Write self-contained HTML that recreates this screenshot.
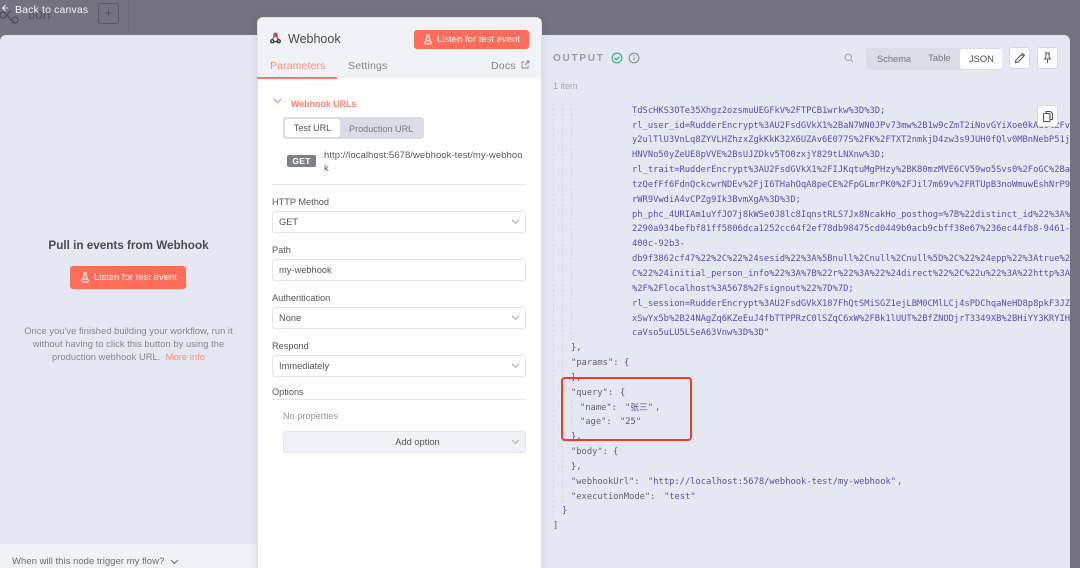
<!DOCTYPE html>
<html><head><meta charset="utf-8"><style>
*{box-sizing:border-box;margin:0;padding:0}
html,body{width:1080px;height:568px;overflow:hidden;background:#75727f}
body{font-family:"Liberation Sans","Noto Sans CJK SC",sans-serif}
#r{position:absolute;left:0;top:0;width:1080px;height:568px;overflow:hidden;filter:blur(.3px)}
.a{position:absolute;white-space:nowrap}
.btn{background:#ff6d5a;border-radius:3px;color:#fff;font-size:9.5px}
.lb{left:272px;font-size:9.2px;color:#555;line-height:12px}
.sel{left:272px;width:254px;height:22px;background:#fff;border:1px solid #e2e5ef;border-radius:3px;font-size:9.3px;color:#555;line-height:21px;padding-left:6px}
.sel svg{position:absolute;right:5px;top:7px}
.j{position:absolute;font-family:"DejaVu Sans Mono","Noto Sans CJK SC",monospace;font-size:8.78px;line-height:15px;color:#5451ac;white-space:pre}
.k{color:#62626d}
.g{position:absolute;width:0;border-left:1px dashed #d6d9e3}
.ib{position:absolute;background:#fff;border:1px solid #d6d9e2;border-radius:3px;width:21px;height:22px}
</style></head><body><div id="r">

<!-- dim background -->
<div class="a" style="left:128px;top:0;width:1px;height:35px;background:#6f6c79"></div>
<svg class="a" style="left:0;top:6px" width="22" height="18" viewBox="0 0 22 18" fill="none" stroke="#4e4c56" stroke-width="1.2"><circle cx="3" cy="9" r="3"/><circle cx="15" cy="14" r="3"/><path d="M6 9c3 0 3 5 6 5M6 9c2 0 3-4 5-4"/></svg>
<div class="a" style="left:28px;top:6px;font-size:14px;line-height:16px;color:#55535d">tion</div>
<div class="a" style="left:98px;top:3px;width:21px;height:21px;border:1px solid #5c5a65;border-radius:3px;color:#55535d;font-size:12px;line-height:19px;text-align:center">+</div>
<svg class="a" style="left:1px;top:3px" width="10" height="12" viewBox="0 0 10 12" fill="none" stroke="#e8e8ec" stroke-width="1.1"><path d="M7 5H2M4.5 2 1.5 5l3 3"/></svg>
<div class="a" style="left:15px;top:3.5px;font-size:10.5px;line-height:13px;color:#f4f4f6;letter-spacing:.15px">Back to canvas</div>

<!-- modal -->
<div class="a" style="left:0;top:35px;width:1070px;height:533px;background:#e5e8f2;border-radius:6px 6px 0 0"></div>

<!-- left panel -->
<div class="a" style="left:0;top:238px;width:257px;text-align:center;font-size:11.7px;line-height:15px;font-weight:bold;color:#4a4a4f">Pull in events from Webhook</div>
<div class="a btn" style="left:70px;top:266px;width:116px;height:23px;line-height:23px;padding-left:24px">Listen for test event</div>
<svg class="a" style="left:80px;top:272px" width="10" height="11" viewBox="0 0 10 11" fill="none" stroke="#fff" stroke-width="1"><path d="M3.5 1h3M4 1v3L1.7 8.5q-.5 1.5 1 1.5h4.6q1.5 0 1-1.5L6 4V1M2.5 7h5"/></svg>
<div class="a" style="left:0;top:325px;width:257px;text-align:center;font-size:9.3px;line-height:13.2px;color:#85868c;letter-spacing:.06px">Once you've finished building your workflow, run it<br>without having to click this button by using the<br>production webhook URL.&nbsp; <span style="color:#ff8a7a">More info</span></div>
<div class="a" style="left:0;top:544px;width:257px;height:24px;background:#f0f2f8"></div>
<div class="a" style="left:12px;top:555.5px;font-size:9.55px;line-height:12px;color:#6d6e74">When will this node trigger my flow?</div>
<svg class="a" style="left:170px;top:559px" width="9" height="6" viewBox="0 0 9 6" fill="none" stroke="#6d6e74" stroke-width="1"><path d="M1 1l3.5 3.5L8 1"/></svg>

<!-- output -->
<div class="a" style="left:553px;top:52px;font-size:10px;line-height:13px;font-weight:bold;color:#9a9ba2;letter-spacing:1.75px">OUTPUT</div>
<svg class="a" style="left:611px;top:52px" width="12" height="12" viewBox="0 0 12 12" fill="none" stroke="#27b07e" stroke-width="1.1"><circle cx="6" cy="6" r="4.9"/><path d="M3.7 6l1.7 1.7 3-3"/></svg>
<svg class="a" style="left:628px;top:52px" width="12" height="12" viewBox="0 0 12 12" fill="none" stroke="#85868c" stroke-width="1"><circle cx="6" cy="6" r="4.9"/><path d="M6 5.5v3M6 3.3v1"/></svg>
<div class="a" style="left:553px;top:80px;font-size:9px;line-height:12px;color:#a5a6ac">1 item</div>
<svg class="a" style="left:844px;top:53px" width="10" height="10" viewBox="0 0 10 10" fill="none" stroke="#a0a2a9" stroke-width="1"><circle cx="4.3" cy="4.3" r="3.2"/><path d="M6.7 6.7 9 9"/></svg>
<div class="a" style="left:866px;top:48px;width:136px;height:22px;background:#dadde6;border-radius:3px"></div>
<div class="a" style="left:960px;top:49px;width:42px;height:20px;background:#fff;border-radius:3px"></div>
<div class="a" style="left:877px;top:52.5px;font-size:9.3px;line-height:12px;color:#777880">Schema</div>
<div class="a" style="left:928px;top:52.5px;font-size:9.5px;line-height:12px;color:#777880">Table</div>
<div class="a" style="left:969px;top:52.5px;font-size:9.3px;line-height:12px;color:#4f4f55">JSON</div>
<div class="ib" style="left:1009px;top:47px"></div>
<svg class="a" style="left:1014px;top:52px" width="12" height="12" viewBox="0 0 12 12" fill="none" stroke="#55555c" stroke-width="1"><path d="M2 8 8.5 1.5l2 2L4 10l-2.7.7zM7.5 2.5l2 2"/></svg>
<div class="ib" style="left:1037px;top:47px"></div>
<svg class="a" style="left:1042px;top:52px" width="11" height="12" viewBox="0 0 11 12" fill="none" stroke="#55555c" stroke-width="1"><path d="M3 1h5M4 1v4L2.5 7h6L7 5V1M5.5 7v4"/></svg>

<!-- guides -->
<div class="g" style="left:553px;top:103px;height:415px"></div>
<div class="g" style="left:562px;top:103px;height:400px"></div>
<div class="g" style="left:571px;top:103px;height:237px"></div>
<div class="g" style="left:571px;top:400px;height:30px"></div>

<!-- JSON -->
<div class="j" style="left:632px;top:103.7px;line-height:14.85px">TdScHKS3OTe35Xhgz2ozsmuUEGFkV%2FTPCB1wrkw%3D%3D;
rl_user_id=RudderEncrypt%3AU2FsdGVkX1%2BaN7WN0JPv73mw%2B1w9cZmT2iNovGYiXoe0kAd0%2Fv
y2ulTlU3VnLq8ZYVLHZhzxZgkKkK32X6UZAv6E077S%2FK%2FTXT2nmkjD4zw3s9JUH0fQlv0MBnNebP51j
HNVNo50yZeUE8pVVE%2BsUJZDkv5TO0zxjY829tLNXnw%3D;
rl_trait=RudderEncrypt%3AU2FsdGVkX1%2FIJKqtuMgPHzy%2BK80mzMVE6CV59wo5Svs0%2FoGC%2Ba
tzQefFf6FdnQckcwrNDEv%2FjI6THahOqA8peCE%2FpGLmrPK0%2FJil7m69v%2FRTUpB3noWmuwEshNrP9
rWR9VwdiA4vCPZg9Ik3BvmXgA%3D%3D;
ph_phc_4URIAm1uYfJO7j8kWSe0J8lc8IqnstRLS7Jx8NcakHo_posthog=%7B%22distinct_id%22%3A%
2290a934befbf81ff5806dca1252cc64f2ef78db98475cd0449b0acb9cbff38e67%236ec44fb8-9461-
400c-92b3-
db9f3862cf47%22%2C%22%24sesid%22%3A%5Bnull%2Cnull%2Cnull%5D%2C%22%24epp%22%3Atrue%2
C%22%24initial_person_info%22%3A%7B%22r%22%3A%22%24direct%22%2C%22u%22%3A%22http%3A
%2F%2Flocalhost%3A5678%2Fsignout%22%7D%7D;
rl_session=RudderEncrypt%3AU2FsdGVkX187FhQtSMiSGZ1ejLBM0CMlLCj4sPDChqaNeHD8p8pkF3JZ
xSwYx5b%2B24NAgZq6KZeEuJ4fbTTPPRzC0lSZqC6xW%2FBk1lUUT%2BfZNODjrT3349XB%2BHiYY3KRYIH
caVso5uLU5LSeA63Vnw%3D%3D"</div>
<div class="j" style="left:571px;top:341.2px">},</div>
<div class="j k" style="left:571px;top:356px">"params":</div><div class="j" style="left:624px;top:356px">{</div>
<div class="j" style="left:571px;top:370.8px">},</div>
<div class="j k" style="left:571px;top:385.6px">"query":</div><div class="j" style="left:620px;top:385.6px">{</div>
<div class="j k" style="left:580px;top:400.5px">"name":</div><div class="j" style="left:625px;top:400.5px">"张三"</div><div class="j" style="left:655px;top:400.5px">,</div>
<div class="j k" style="left:580px;top:415.3px">"age":</div><div class="j" style="left:620px;top:415.3px">"25"</div>
<div class="j" style="left:571px;top:430.1px">},</div>
<div class="j k" style="left:571px;top:445px">"body":</div><div class="j" style="left:613px;top:445px">{</div>
<div class="j" style="left:571px;top:459.8px">},</div>
<div class="j k" style="left:571px;top:474.6px">"webhookUrl":</div><div class="j" style="left:648px;top:474.6px">"http://localhost:5678/webhook-test/my-webhook"</div><div class="j" style="left:897px;top:474.6px">,</div>
<div class="j k" style="left:571px;top:489.5px">"executionMode":</div><div class="j" style="left:664px;top:489.5px">"test"</div>
<div class="j" style="left:562px;top:504.3px">}</div>
<div class="j" style="left:553px;top:518.8px">]</div>
<div class="a" style="left:561px;top:377px;width:131px;height:64px;border:2px solid #f23a2c;border-radius:4px"></div>
<div class="ib" style="left:1037px;top:105px"></div>
<svg class="a" style="left:1042px;top:110px" width="12" height="13" viewBox="0 0 12 13" fill="none" stroke="#55555c" stroke-width="1.1"><path d="M4 3V1.5h4.5L10.5 3.5V9.5H8"/><rect x="1.5" y="3.5" width="6.5" height="8" rx=".6"/></svg>

<!-- centre panel -->
<div class="a" style="left:257px;top:17px;width:285px;height:560px;background:#fff;border:1px solid #dfe2ec;border-radius:6px;box-shadow:0 0 8px rgba(60,60,90,.12)"></div>
<div class="a" style="left:258px;top:18px;width:283px;height:60px;background:#f0f2f8;border-radius:5px 5px 0 0"></div>
<svg class="a" style="left:269px;top:32px" width="13" height="12" viewBox="0 0 13 13" fill="none" stroke-width="1.5"><path d="M6.5 2 3.5 7.5" stroke="#c94a66"/><path d="M4 10.5h6" stroke="#4a4a58"/><path d="M6.5 2 10 9" stroke="#8d3f78"/><circle cx="6.5" cy="3" r="1.7" stroke="#c94a66"/><circle cx="3" cy="10" r="1.7" stroke="#3f3f4a"/><circle cx="10" cy="10" r="1.7" stroke="#3f3f4a"/></svg>
<div class="a" style="left:288px;top:31px;font-size:12.5px;line-height:16px;color:#4a4a50">Webhook</div>
<div class="a btn" style="left:414px;top:30px;width:115px;height:19px;line-height:19.5px;padding-left:23px">Listen for test event</div>
<svg class="a" style="left:423px;top:34px" width="10" height="11" viewBox="0 0 10 11" fill="none" stroke="#fff" stroke-width="1"><path d="M3.5 1h3M4 1v3L1.7 8.5q-.5 1.5 1 1.5h4.6q1.5 0 1-1.5L6 4V1M2.5 7h5"/></svg>
<div class="a" style="left:270px;top:60px;font-size:10.5px;line-height:13px;color:#ff8a7a;letter-spacing:.12px">Parameters</div>
<div class="a" style="left:348px;top:60px;font-size:10.5px;line-height:13px;color:#84858b;letter-spacing:.2px">Settings</div>
<div class="a" style="left:491px;top:60px;font-size:10.5px;line-height:13px;color:#84858b;letter-spacing:.2px">Docs</div>
<svg class="a" style="left:521px;top:60px" width="9" height="9" viewBox="0 0 9 9" fill="none" stroke="#84858b" stroke-width=".9"><path d="M7 5.5V8H1V2h2.5M4 5l4-4M5.5 1H8v2.5"/></svg>
<div class="a" style="left:257px;top:77px;width:80px;height:1.5px;background:#ff7a69"></div>

<svg class="a" style="left:273px;top:98px" width="9" height="6" viewBox="0 0 9 6" fill="none" stroke="#ff7a69" stroke-width="1"><path d="M1 1l3.5 3.5L8 1"/></svg>
<div class="a" style="left:291px;top:98px;font-size:8.9px;line-height:12px;font-weight:bold;color:#ff8373">Webhook URLs</div>
<div class="a" style="left:283px;top:117px;width:141px;height:22px;background:#dadde6;border-radius:3px"></div>
<div class="a" style="left:285px;top:119px;width:55px;height:18px;background:#fff;border-radius:3px;font-size:9.1px;line-height:19px;text-align:center;color:#55555b">Test URL</div>
<div class="a" style="left:349px;top:123px;font-size:9.1px;line-height:12px;color:#7a7b82">Production URL</div>
<div class="a" style="left:287px;top:155px;width:29px;height:12px;background:#7e8186;border-radius:2px;color:#fff;font-size:8.5px;font-weight:bold;line-height:12px;text-align:center;letter-spacing:.3px">GET</div>
<div class="a" style="left:324px;top:149px;font-size:9.5px;line-height:13px;color:#5a5a60;letter-spacing:.06px">http://localhost:5678/webhook-test/my-webhoo<br>k</div>
<div class="a" style="left:272px;top:184px;width:254px;height:1px;background:#e2e5ef"></div>

<div class="a lb" style="top:195.5px">HTTP Method</div>
<div class="a sel" style="top:211px">GET<svg width="9" height="6" viewBox="0 0 9 6" fill="none" stroke="#a5a7af" stroke-width=".9"><path d="M1 1l3.5 3.5L8 1"/></svg></div>
<div class="a lb" style="top:243.5px">Path</div>
<div class="a sel" style="top:259px">my-webhook</div>
<div class="a lb" style="top:291.5px">Authentication</div>
<div class="a sel" style="top:307px">None<svg width="9" height="6" viewBox="0 0 9 6" fill="none" stroke="#a5a7af" stroke-width=".9"><path d="M1 1l3.5 3.5L8 1"/></svg></div>
<div class="a lb" style="top:340px">Respond</div>
<div class="a sel" style="top:355px">Immediately<svg width="9" height="6" viewBox="0 0 9 6" fill="none" stroke="#a5a7af" stroke-width=".9"><path d="M1 1l3.5 3.5L8 1"/></svg></div>
<div class="a lb" style="top:386px">Options</div>
<div class="a" style="left:272px;top:399px;width:254px;height:1px;background:#e2e5ef"></div>
<div class="a" style="left:283px;top:410px;font-size:9.2px;line-height:12px;color:#94959b">No properties</div>
<div class="a" style="left:283px;top:431px;width:243px;height:22px;background:#f0f2f8;border:1px solid #e2e5ef;border-radius:3px;font-size:9.3px;line-height:21px;color:#55555b;text-align:center;padding-left:26px">Add option<svg style="position:absolute;right:5px;top:7px" width="9" height="6" viewBox="0 0 9 6" fill="none" stroke="#a5a7af" stroke-width=".9"><path d="M1 1l3.5 3.5L8 1"/></svg></div>

</div></body></html>
